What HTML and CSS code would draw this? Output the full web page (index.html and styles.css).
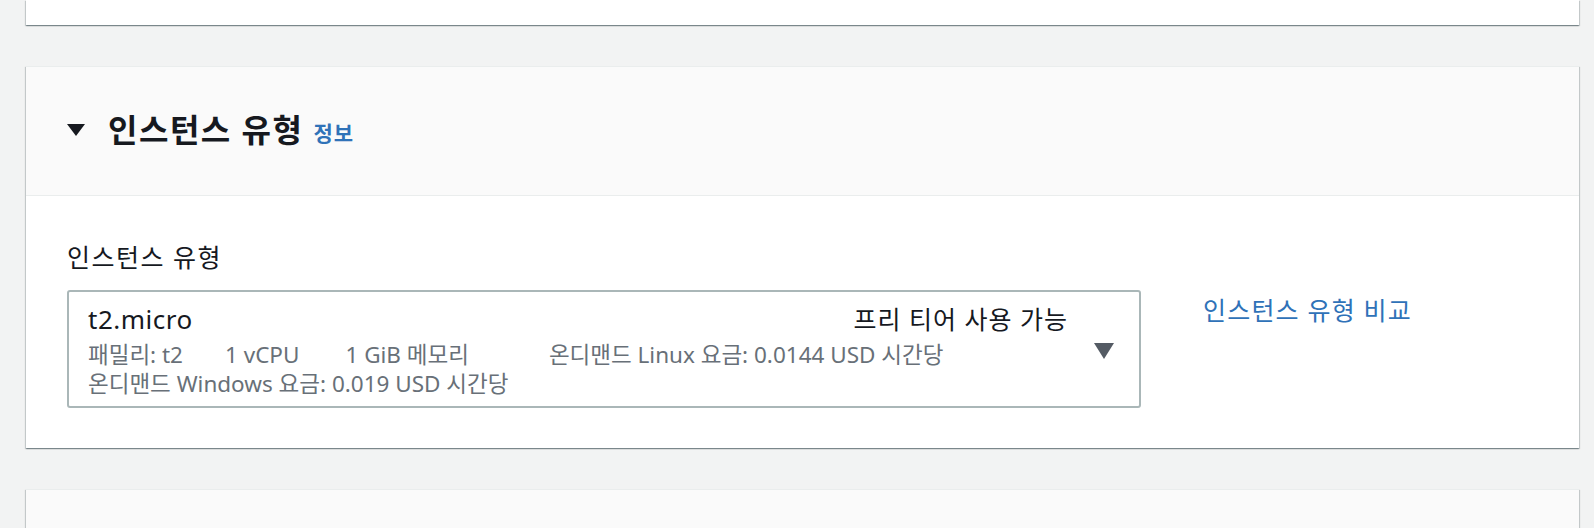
FILE: index.html
```html
<!DOCTYPE html>
<html lang="ko">
<head>
<meta charset="utf-8">
<title>인스턴스 유형</title>
<link rel="stylesheet" href="styles.css">
</head>
<body>
<div class="page">
  <div class="card card-prev"></div>

  <section class="card">
    <header class="card-header">
      <svg class="expand-icon" width="18" height="12" viewBox="0 0 18 12" aria-hidden="true"><path d="M0 0 H18 L9 12 Z" fill="#16191f"/></svg>
      <h2 class="card-title">인스턴스 유형</h2>
      <a class="info-link" href="#">정보</a>
    </header>
    <div class="card-body">
      <div class="field-label">인스턴스 유형</div>
      <div class="field-row">
        <div class="select">
          <div class="select-content">
            <div class="select-main">
              <span class="option-name">t2.micro</span>
              <span class="option-badge">프리 티어 사용 가능</span>
            </div>
            <div class="option-tags">
              <span class="tag tag-family">패밀리: t2</span>
              <span class="tag tag-cpu">1 vCPU</span>
              <span class="tag tag-mem">1 GiB 메모리</span>
              <span class="tag">온디맨드 Linux 요금: 0.0144 USD 시간당</span>
              <span class="tag">온디맨드 Windows 요금: 0.019 USD 시간당</span>
            </div>
          </div>
          <svg class="caret" width="20" height="16" viewBox="0 0 20 16" aria-hidden="true"><path d="M0 0 H20 L10 16 Z" fill="#545b64"/></svg>
        </div>
        <a class="compare-link" href="#">인스턴스 유형 비교</a>
      </div>
    </div>
  </section>

  <section class="card card-next">
    <div class="card-header card-header-empty"></div>
  </section>
</div>
</body>
</html>
```

FILE: styles.css
```css
* { box-sizing: border-box; }

html, body {
  margin: 0;
  padding: 0;
  background: #f2f3f3;
  font-family: "Noto Sans", "Noto Sans CJK KR", sans-serif;
  color: #16191f;
  overflow: hidden;
}

.page {
  display: flex;
  flex-direction: column;
  gap: 41px;
  padding: 0 15px 0 26px;
}

.card {
  background: #ffffff;
  border-top: 1px solid #eaeded;
  box-shadow: 0 1px 1px 0 rgba(0, 28, 36, 0.3),
              1px 1px 1px 0 rgba(0, 28, 36, 0.15),
              -1px 1px 1px 0 rgba(0, 28, 36, 0.15);
}

.card-prev {
  height: 25px;
  border-top: none;
}

.card-next {
  height: 120px;
  background: #fafafa;
}

.card-header {
  display: flex;
  align-items: center;
  background: #fafafa;
  border-bottom: 1px solid #eaeded;
  padding: 44px 41px 47px 41px;
}

.card-header-empty {
  border-bottom: none;
  height: 100px;
}

.expand-icon {
  flex: none;
  margin-right: 23px;
  margin-top: 1px;
}

.card-title {
  margin: 0;
  font-size: 32px;
  line-height: 37px;
  font-weight: 700;
  letter-spacing: 1.5px;
  color: #16191f;
}

.info-link {
  margin-left: 10px;
  margin-top: 5px;
  font-size: 21px;
  font-weight: 700;
  letter-spacing: 1px;
  color: #2f72b8;
  text-decoration: none;
}

.card-body {
  padding: 45px 41px 40px 41px;
}

.field-label {
  font-size: 25px;
  line-height: 32px;
  letter-spacing: 1.5px;
  color: #16191f;
  margin-bottom: 17px;
}

.field-row {
  display: flex;
  align-items: flex-start;
  gap: 62px;
}

.select {
  width: 1074px;
  flex: none;
  display: flex;
  align-items: center;
  border: 2px solid #aab7b8;
  border-radius: 3px;
  padding: 12px 25px 8px 19px;
}

.select-content {
  flex: 1;
  min-width: 0;
}

.select-main {
  display: flex;
  justify-content: space-between;
  align-items: baseline;
  margin-bottom: 6px;
}

.option-name {
  font-size: 26px;
  line-height: 30px;
  letter-spacing: 0.5px;
  color: #16191f;
}

.option-badge {
  font-size: 25px;
  line-height: 30px;
  letter-spacing: 1px;
  color: #16191f;
}

.option-tags {
  display: flex;
  flex-wrap: wrap;
  font-size: 22.5px;
  line-height: 29px;
  color: #687078;
  padding-right: 60px;
}

.tag-family { margin-right: 42px; }
.tag-cpu { margin-right: 46px; }
.tag-mem { margin-right: 80px; }

.caret {
  flex: none;
  margin-left: 26px;
}

.compare-link {
  padding-top: 4px;
  font-size: 25px;
  line-height: 32px;
  letter-spacing: 1.2px;
  color: #2f72b8;
  text-decoration: none;
  white-space: nowrap;
}
```
